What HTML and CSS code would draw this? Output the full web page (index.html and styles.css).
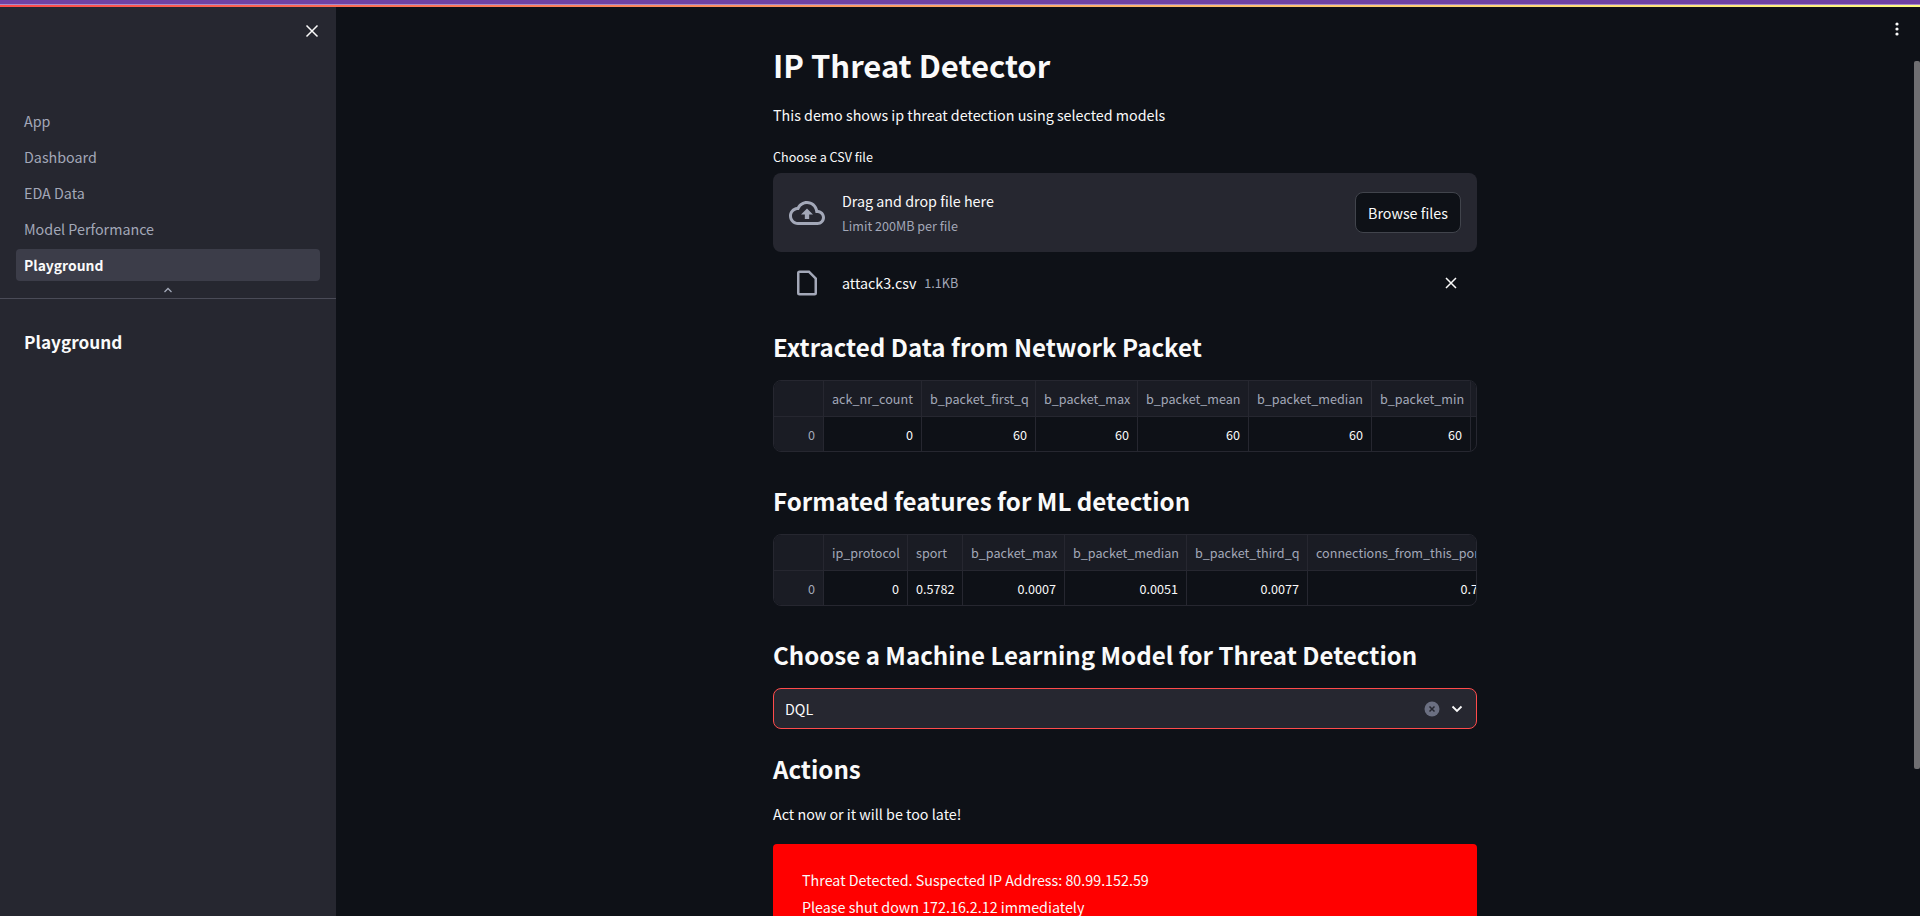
FILE: index.html
```html
<!DOCTYPE html>
<html lang="en">
<head>
  <meta charset="UTF-8">
  <title>IP Threat Detector</title>
  <link rel="stylesheet" href="styles.css">
</head>
<body>
<div class="top-strip">
  <div class="strip-purple"></div>
  <div class="strip-light"></div>
  <div class="strip-gradient"></div>
</div>
<div class="app">
  <aside class="sidebar">
    <div class="sidebar-close">
      <svg width="16" height="16" viewBox="0 0 16 16"><path d="M2.5 2.5l11 11M13.5 2.5l-11 11" stroke="#fafafa" stroke-width="1.5" fill="none"/></svg>
    </div>
    <nav class="nav">
      <a class="nav-item">App</a>
      <a class="nav-item">Dashboard</a>
      <a class="nav-item">EDA Data</a>
      <a class="nav-item">Model Performance</a>
      <a class="nav-item active">Playground</a>
    </nav>
    <div class="nav-toggle">
      <svg width="10" height="6" viewBox="0 0 10 6"><path d="M1.5 5L5 1.5 8.500 5" stroke="#a3a8b8" stroke-width="1.3" fill="none"/></svg>
    </div>
    <h3 class="sidebar-title">Playground</h3>
  </aside>

  <main class="main">
    <button class="menu-btn">
      <svg width="4" height="14" viewBox="0 0 4 14"><circle cx="2" cy="2" r="1.6" fill="#fafafa"/><circle cx="2" cy="7" r="1.6" fill="#fafafa"/><circle cx="2" cy="12" r="1.6" fill="#fafafa"/></svg>
    </button>
    <div class="scrollbar"></div>

    <div class="content">
      <h1>IP Threat Detector</h1>
      <p class="intro">This demo shows ip threat detection using selected models</p>

      <label class="field-label">Choose a CSV file</label>
      <div class="dropzone">
        <svg class="cloud" width="36" height="36" viewBox="0 0 24 24"><path fill="#a3a8b8" d="M19.35 10.04C18.67 6.59 15.64 4 12 4 9.110 4 6.600 5.640 5.350 8.040 2.340 8.360 0 10.910 0 14c0 3.310 2.690 6 6 6h13c2.760 0 5-2.240 5-5 0-2.640-2.050-4.780-4.650-4.960zM19 18H6c-2.210 0-4-1.790-4-4 0-2.050 1.530-3.760 3.560-3.970l1.070-.11.5-.95C8.080 7.140 9.940 6 12 6c2.620 0 4.880 1.860 5.390 4.430l.3 1.500 1.530.11c1.560.1 2.780 1.410 2.780 2.960 0 1.650-1.350 3-3 3zM8 13h2.550v3h2.900v-3H16l-4-4z"/></svg>
        <div class="drop-text">
          <div class="drop-title">Drag and drop file here</div>
          <div class="drop-limit">Limit 200MB per file</div>
        </div>
        <button class="browse-btn">Browse files</button>
      </div>

      <div class="file-row">
        <svg class="file-icon" width="30" height="30" viewBox="0 0 24 24"><path fill="#a3a8b8" d="M14 2H6a2 2 0 0 0-2 2v16a2 2 0 0 0 2 2h12a2 2 0 0 0 2-2V8l-6-6zM6 20V4h7.170L18 8.830V20H6z"/></svg>
        <span class="file-name">attack3.csv</span>
        <span class="file-size">1.1KB</span>
        <svg class="file-remove" width="14" height="14" viewBox="0 0 14 14"><path d="M2 2l10 10M12 2L2 12" stroke="#fafafa" stroke-width="1.5" fill="none"/></svg>
      </div>

      <h2>Extracted Data from Network Packet</h2>
      <div class="frame frame-packet">
        <div class="cell head"></div>
        <div class="cell head">ack_nr_count</div>
        <div class="cell head">b_packet_first_q</div>
        <div class="cell head">b_packet_max</div>
        <div class="cell head">b_packet_mean</div>
        <div class="cell head">b_packet_median</div>
        <div class="cell head">b_packet_min</div>
        <div class="cell head"></div>
        <div class="cell index">0</div>
        <div class="cell num">0</div>
        <div class="cell num">60</div>
        <div class="cell num">60</div>
        <div class="cell num">60</div>
        <div class="cell num">60</div>
        <div class="cell num">60</div>
        <div class="cell num"></div>
      </div>

      <h2>Formated features for ML detection</h2>
      <div class="frame frame-features">
        <div class="cell head"></div>
        <div class="cell head">ip_protocol</div>
        <div class="cell head">sport</div>
        <div class="cell head">b_packet_max</div>
        <div class="cell head">b_packet_median</div>
        <div class="cell head">b_packet_third_q</div>
        <div class="cell head">connections_from_this_port</div>
        <div class="cell index">0</div>
        <div class="cell num">0</div>
        <div class="cell num">0.5782</div>
        <div class="cell num">0.0007</div>
        <div class="cell num">0.0051</div>
        <div class="cell num">0.0077</div>
        <div class="cell num">0.7143</div>
      </div>

      <h2>Choose a Machine Learning Model for Threat Detection</h2>
      <div class="select">
        <span class="select-value">DQL</span>
        <svg class="select-clear" width="16" height="16" viewBox="0 0 16 16"><circle cx="8" cy="8" r="7.500" fill="#6b6f81"/><path d="M5.500 5.500l5 5M10.500 5.500l-5 5" stroke="#262730" stroke-width="1.500"/></svg>
        <svg class="select-arrow" width="12" height="8" viewBox="0 0 12 8"><path d="M1.500 1.500L6 6l4.500-4.500" stroke="#fafafa" stroke-width="1.800" fill="none"/></svg>
      </div>

      <h2>Actions</h2>
      <p class="warn-note">Act now or it will be too late!</p>

      <div class="alert">
        <p>Threat Detected. Suspected IP Address: 80.99.152.59</p>
        <p>Please shut down 172.16.2.12 immediately</p>
      </div>
    </div>
  </main>
</div>
</body>
</html>
```

FILE: styles.css
```css
* {
  margin: 0;
  padding: 0;
  box-sizing: border-box;
}

html, body {
  height: 100%;
  overflow: hidden;
}

body {
  display: flex;
  flex-direction: column;
  background: #0e1117;
  color: #fafafa;
  font-family: "Noto Sans CJK SC", "Noto Sans", sans-serif;
  font-size: 14.3px;
  line-height: 24px;
}

/* top strip */
.top-strip {
  flex: none;
}

.strip-purple {
  height: 4px;
  background: #6f42a3;
}

.strip-light {
  height: 1px;
  background: #a98ccb;
}

.strip-gradient {
  height: 2px;
  background: linear-gradient(90deg, #ff4b4b, #fffd80);
}

.app {
  flex: 1;
  display: flex;
  min-height: 0;
}

/* sidebar */
.sidebar {
  width: 336px;
  flex: none;
  background: #262730;
}

.sidebar-close {
  display: flex;
  justify-content: flex-end;
  padding: 16px 16px 0 0;
  height: 98px;
}

.nav {
  display: flex;
  flex-direction: column;
  gap: 4px;
  padding: 0 16px;
}

.nav-item {
  height: 32px;
  padding: 0 8px;
  border-radius: 4px;
  color: #a3a8b8;
  line-height: 32px;
}

.nav-item.active {
  background: #3c3d49;
  color: #fafafa;
  font-weight: 600;
  font-size: 13.900px;
}

.nav-toggle {
  height: 18px;
  display: flex;
  justify-content: center;
  align-items: center;
  border-bottom: 1px solid #4a4b57;
}

.sidebar-title {
  padding: 23px 24px 0;
  font-size: 17.200px;
  font-weight: 600;
  line-height: 40px;
}

/* main */
.main {
  flex: 1;
  min-width: 0;
  position: relative;
  padding-right: 6px;
  overflow: hidden;
}

.menu-btn {
  position: absolute;
  top: 15px;
  right: 21px;
  background: none;
  border: none;
  display: flex;
}

.scrollbar {
  position: absolute;
  top: 54px;
  right: 0;
  width: 6px;
  height: 708px;
  background: #6f6f72;
  border-radius: 2px;
}

.content {
  width: 704px;
  margin: 0 auto;
  padding-top: 38px;
}

h1 {
  font-size: 31px;
  font-weight: 600;
  line-height: 40px;
}

.intro {
  margin-top: 18px;
}

.field-label {
  display: block;
  margin-top: 20px;
  font-size: 12.600px;
  line-height: 20px;
}

h2 {
  font-size: 24.100px;
  font-weight: 600;
  line-height: 40px;
}

/* file uploader */
.dropzone {
  display: flex;
  align-items: center;
  height: 79px;
  margin-top: 6px;
  padding: 0 16px;
  background: #262730;
  border-radius: 8px;
}

.drop-text {
  flex: 1;
  margin-left: 17px;
}

.drop-title {
  line-height: 24px;
}

.drop-limit {
  color: #a3a8b8;
  font-size: 12.600px;
  line-height: 20px;
  margin-top: 3px;
}

.browse-btn {
  width: 106px;
  height: 41px;
  background: #0e1117;
  border: 1px solid #41444c;
  border-radius: 8px;
  color: #fafafa;
  font: inherit;
}

.file-row {
  display: flex;
  align-items: center;
  height: 40px;
  margin: 11px 0 24px;
  padding: 0 19px 0 19px;
}

.file-name {
  margin-left: 20px;
}

.file-size {
  flex: 1;
  margin-left: 8px;
  color: #a3a8b8;
  font-size: 12.600px;
}

/* dataframes */
.frame {
  display: grid;
  grid-template-rows: 36px 36px;
  height: 72px;
  margin: 13px 0 29px;
  background: #0e1117;
  border: 1px solid #262730;
  border-radius: 8px;
  overflow: hidden;
  font-size: 12.600px;
}

.frame-packet {
  grid-template-columns: 50px 98px 114px 102px 111px 123px 99px 1fr;
}

.frame-features {
  grid-template-columns: 50px 84px 55px 102px 122px 121px 200px;
}

.cell {
  padding: 0 8px;
  line-height: 35px;
  border-right: 1px solid #262730;
  white-space: nowrap;
  overflow: hidden;
}

.head {
  background: #1a1c24;
  color: #a3a8b8;
  border-bottom: 1px solid #262730;
}

.index {
  background: #1a1c24;
  color: #a3a8b8;
  text-align: right;
}

.num {
  text-align: right;
}

/* select */
.select {
  display: flex;
  align-items: center;
  height: 41px;
  margin: 13px 0 20px;
  padding: 0 13px 0 11px;
  background: #262730;
  border: 1px solid #ff4b4b;
  border-radius: 8px;
}

.select-value {
  flex: 1;
}

.select-arrow {
  margin-left: 11px;
}

.warn-note {
  margin: 13px 0 18px;
}

/* alert */
.alert {
  height: 160px;
  padding: 24px 29px;
  background: #ff0000;
  border-radius: 4px;
}

.alert p {
  line-height: 24px;
  margin-bottom: 3px;
}
```
